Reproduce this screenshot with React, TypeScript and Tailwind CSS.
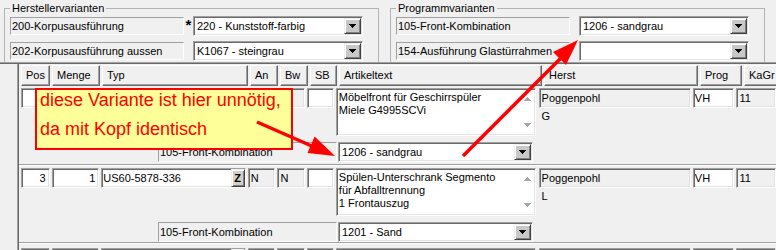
import React from "react";

const SUNKEN =
  "border border-t-[#a0a0a0] border-l-[#a0a0a0] border-r-white border-b-white shadow-[inset_1px_1px_0_#696969,inset_-1px_-1px_0_#e3e3e3]";
const STATIC =
  "border border-t-[#a0a0a0] border-l-[#a0a0a0] border-r-white border-b-white";
const RAISED =
  "border border-t-white border-l-white border-r-[#696969] border-b-[#696969] shadow-[inset_-1px_-1px_0_#a0a0a0]";
const BTN =
  "border border-t-[#f0f0f0] border-l-[#f0f0f0] border-r-[#404040] border-b-[#404040] shadow-[inset_1px_1px_0_#ffffff,inset_-1px_-1px_0_#808080]";

function DropBtn() {
  return (
    <div className={`w-[17px] h-full flex items-center justify-center bg-[#c8c8c8] ${BTN}`}>
      <svg width="7" height="4" viewBox="0 0 7 4" shapeRendering="crispEdges">
        <path d="M0 0H7L3.5 4Z" fill="#000" />
      </svg>
    </div>
  );
}

function Combo({ text, className }: { text?: string; className: string }) {
  return (
    <div className={`h-[20px] flex bg-white p-[1px] ${SUNKEN} ${className}`}>
      <div className="flex-1 flex items-center pl-[2px] whitespace-nowrap overflow-hidden">{text}</div>
      <DropBtn />
    </div>
  );
}

function VarRow({ label, value, star }: { label: string; value?: string; star?: boolean }) {
  return (
    <div className="h-[20px] flex items-center">
      <div className={`w-[174px] h-[18px] flex items-center pl-[1px] whitespace-nowrap ${STATIC}`}>{label}</div>
      <div className="w-[9px] h-full flex justify-center">
        {star && <span className="text-[15px] font-bold leading-none mt-[1px]">*</span>}
      </div>
      <Combo text={value} className="w-[170px]" />
    </div>
  );
}

function GroupBox({
  title,
  className,
  rows,
}: {
  title: string;
  className: string;
  rows: { label: string; value?: string; star?: boolean }[];
}) {
  return (
    <fieldset className={`w-[375px] h-[80px] shrink-0 border border-[#b4b4b4] px-[5px] ${className}`}>
      <legend className="px-[2px] leading-[17px]">{title}</legend>
      <div className="-mt-[1px] flex flex-col gap-[5px]">
        {rows.map((r, i) => (
          <VarRow key={i} {...r} />
        ))}
      </div>
    </fieldset>
  );
}

function ScrollArrows() {
  return (
    <div className="w-[14px] h-full flex flex-col items-center justify-between pt-[8px] pb-[8px]">
      <svg width="7" height="4" viewBox="0 0 7 4" shapeRendering="crispEdges">
        <path d="M3.5 0L7 4H0Z" fill="#a8a8a8" />
      </svg>
      <svg width="7" height="4" viewBox="0 0 7 4" shapeRendering="crispEdges">
        <path d="M0 0H7L3.5 4Z" fill="#a8a8a8" />
      </svg>
    </div>
  );
}

type RowData = {
  pos?: string;
  menge?: string;
  typ?: string;
  an?: string;
  bw?: string;
  text: string[];
  herst: string;
  extra: string;
  prog: string;
  kagr: string;
  combo: string;
};

function ItemRow({ d, height, sepGap }: { d: RowData; height: string; sepGap: string }) {
  return (
    <div className={`flex flex-col ${height}`}>
      <div className="h-[54px] flex items-start gap-[2px] pl-[2px]">
        <div className={`w-[29px] h-[20px] bg-white flex items-center justify-end pr-[3px] ${SUNKEN}`}>{d.pos}</div>
        <div className={`w-[48px] h-[20px] bg-white flex items-center justify-end pr-[3px] ${SUNKEN}`}>{d.menge}</div>
        <div className={`w-[146px] h-[20px] bg-white flex ${SUNKEN}`}>
          <div className="flex-1 flex items-center pl-[1px] whitespace-nowrap">{d.typ}</div>
          <div className={`w-[14px] h-full flex items-center justify-center bg-[#d4d0c8] font-bold text-[11px] ${BTN}`}>Z</div>
        </div>
        <div className={`w-[28px] h-[20px] bg-[#f0f0f0] flex items-center pl-[2px] ${SUNKEN}`}>{d.an}</div>
        <div className={`w-[28px] h-[20px] bg-[#f0f0f0] flex items-center pl-[2px] ${SUNKEN}`}>{d.bw}</div>
        <div className={`w-[27px] h-[20px] bg-white ${SUNKEN}`} />
        <div className={`w-[202px] h-[48px] bg-white flex ${SUNKEN}`}>
          <div className="flex-1 pl-[2px] pt-[2px] leading-[13px] whitespace-nowrap overflow-hidden">
            {d.text.map((t, i) => (
              <div key={i}>{t}</div>
            ))}
          </div>
          <ScrollArrows />
        </div>
        <div className="w-[154px] ml-[1px] flex flex-col">
          <div className={`h-[20px] bg-[#f0f0f0] flex items-center pl-[2px] ${SUNKEN}`}>{d.herst}</div>
          <div className="pl-[3px] mt-[2px] leading-[13px]">{d.extra}</div>
        </div>
        <div className={`w-[42px] h-[20px] bg-white flex items-center pl-[1px] ${SUNKEN}`}>{d.prog}</div>
        <div className={`w-[40px] h-[20px] bg-[#f0f0f0] flex items-center pl-[2px] ${SUNKEN}`}>{d.kagr}</div>
      </div>
      <div className="h-[20px] flex ml-[139px]">
        <div className={`w-[179px] h-[20px] flex items-center pl-[1px] whitespace-nowrap ${STATIC}`}>105-Front-Kombination</div>
        <Combo text={d.combo} className="w-[195px] ml-[1px]" />
      </div>
      <div className={sepGap} />
      <div className="h-[2px] border-t border-t-[#a0a0a0] border-b border-b-white" />
    </div>
  );
}

const headers: [string, string][] = [
  ["Pos", "w-[29px]"],
  ["Menge", "w-[48px]"],
  ["Typ", "w-[146px]"],
  ["An", "w-[28px]"],
  ["Bw", "w-[28px]"],
  ["SB", "w-[27px]"],
  ["Artikeltext", "w-[203px]"],
  ["Herst", "w-[154px]"],
  ["Prog", "w-[42px]"],
  ["KaGr", "w-[40px]"],
];

function Grid() {
  const r1: RowData = {
    text: ["Möbelfront für Geschirrspüler", "Miele G4995SCVi"],
    herst: "Poggenpohl",
    extra: "G",
    prog: "VH",
    kagr: "11",
    combo: "1206 - sandgrau",
  };
  const r2: RowData = {
    pos: "3",
    menge: "1",
    typ: "US60-5878-336",
    an: "N",
    bw: "N",
    text: ["Spülen-Unterschrank Segmento", "für Abfalltrennung", "1 Frontauszug"],
    herst: "Poggenpohl",
    extra: "L",
    prog: "VH",
    kagr: "11",
    combo: "1201 - Sand",
  };
  const r3: RowData = { text: [], herst: "", extra: "", prog: "", kagr: "", combo: "" };
  return (
    <div className="border-t border-t-[#a0a0a0]">
      <div className="border-t border-t-[#696969] flex h-[200px]">
        <div className="w-[19px] shrink-0 h-full bg-[#f0f0f0] border-r border-r-[#696969] shadow-[inset_-1px_0_0_#a0a0a0]" />
        <div className="flex-1 flex flex-col min-w-0">
          <div className="h-[24px] shrink-0 flex gap-[2px] pl-[2px] pt-[1px]">
            {headers.map(([h, w]) => (
              <div key={h} className={`${w} shrink-0 h-[21px] flex items-center pl-[4px] bg-[#f0f0f0] ${RAISED}`}>
                {h}
              </div>
            ))}
          </div>
          <ItemRow d={r1} height="h-[80px] shrink-0" sepGap="h-[2px]" />
          <ItemRow d={r2} height="h-[78px] shrink-0" sepGap="h-0" />
          <div className="mt-[2px]">
            <ItemRow d={r3} height="h-[78px] shrink-0" sepGap="h-0" />
          </div>
        </div>
      </div>
    </div>
  );
}

function Callout() {
  return (
    <div className="absolute left-[35px] top-[88px] w-[258px] h-[62px] bg-[#ffff99] border-2 border-[#ff0000] pl-[3px] flex flex-col gap-[9px] text-[18px] leading-[20px] text-[#ff0000] whitespace-nowrap font-['Liberation_Sans',Arial,sans-serif]">
      <div>diese Variante ist hier unnötig,</div>
      <div>da mit Kopf identisch</div>
    </div>
  );
}

function Arrows() {
  return (
    <svg className="absolute left-0 top-0 pointer-events-none" width="776" height="250" viewBox="0 0 776 250">
      <line x1="257" y1="122" x2="314" y2="147" stroke="#ff0000" strokeWidth="3.5" />
      <polygon points="335,156 307.5,153 314.6,136.5" fill="#ff0000" />
      <line x1="463" y1="156" x2="562" y2="57" stroke="#ff0000" strokeWidth="3.5" />
      <polygon points="578,40 566,65 553,52" fill="#ff0000" />
    </svg>
  );
}

export default function App() {
  return (
    <div className="relative w-[776px] h-[250px] overflow-hidden bg-[#f0f0f0] text-[11px] text-black font-['Liberation_Sans',Arial,sans-serif]">
      <div className="h-[62px] overflow-hidden flex">
        <GroupBox
          title="Herstellervarianten"
          className="ml-[4px]"
          rows={[
            { label: "200-Korpusausführung", value: "220 - Kunststoff-farbig", star: true },
            { label: "202-Korpusausführung aussen", value: "K1067 - steingrau" },
          ]}
        />
        <GroupBox
          title="Programmvarianten"
          className="ml-[11px]"
          rows={[
            { label: "105-Front-Kombination", value: "1206 - sandgrau" },
            { label: "154-Ausführung Glastürrahmen", value: "" },
          ]}
        />
      </div>
      <Grid />
      <Callout />
      <Arrows />
    </div>
  );
}
